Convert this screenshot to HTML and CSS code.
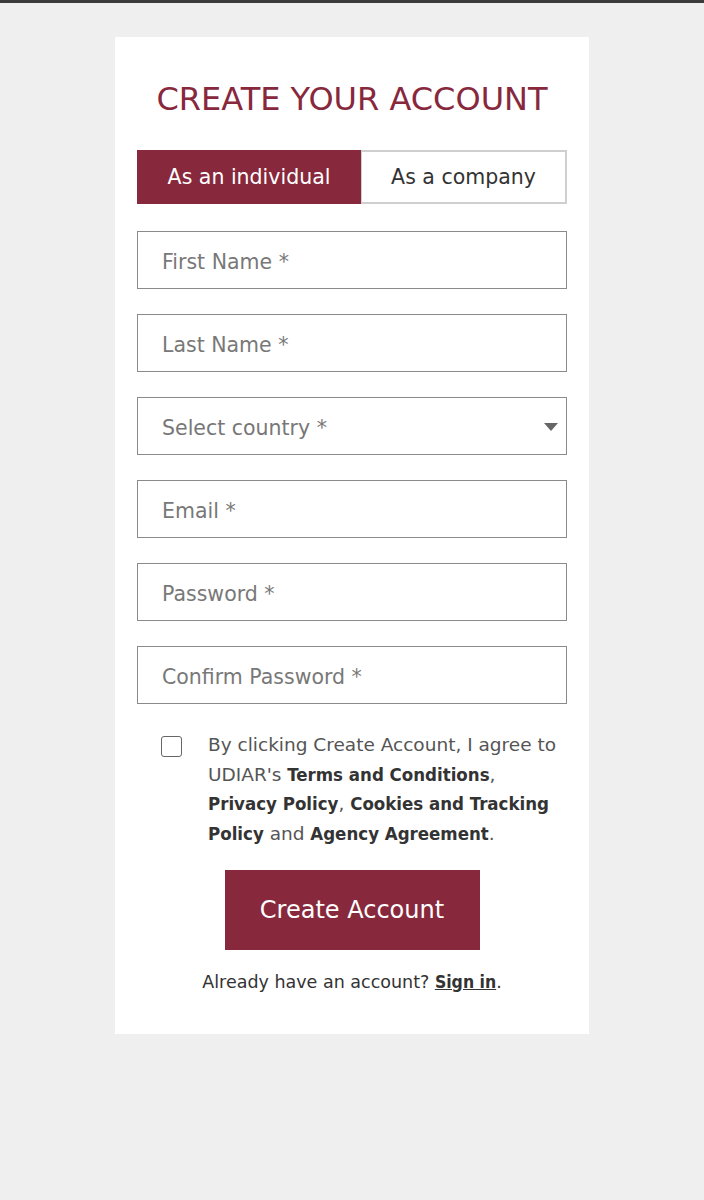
FILE: index.html
```html
<!DOCTYPE html>
<html lang="en">
<head>
<meta charset="UTF-8">
<link rel="stylesheet" href="styles.css">
<title>Create your account</title>
</head>
<body>
<div class="card">
  <h1 class="title">CREATE YOUR ACCOUNT</h1>
  <div class="tabs">
    <div class="tab active">As an individual</div>
    <div class="tab">As a company</div>
  </div>
  <form class="form">
    <input class="field" type="text" placeholder="First Name *">
    <input class="field" type="text" placeholder="Last Name *">
    <div class="select-wrap">
      <select class="field select">
        <option>Select country *</option>
      </select>
      <svg class="caret" width="14" height="8" viewBox="0 0 14 8"><path d="M0 0h14L7 8z" fill="#666"/></svg>
    </div>
    <input class="field" type="email" placeholder="Email *">
    <input class="field" type="password" placeholder="Password *">
    <input class="field" type="password" placeholder="Confirm Password *">
    <label class="agree">
      <span class="box"></span>
      <span class="agree-text">By clicking Create Account, I agree to<br>UDIAR's <b>Terms and Conditions</b>,<br><b>Privacy Policy</b>, <b>Cookies and Tracking</b><br><b>Policy</b> and <b>Agency Agreement</b>.</span>
    </label>
    <div class="actions">
      <button class="submit" type="button">Create Account</button>
    </div>
    <p class="signin">Already have an account? <a href="#">Sign in</a>.</p>
  </form>
</div>
</body>
</html>
```
FILE: styles.css
```css
body {
  margin: 0;
  padding: 0;
  background: #efefef;
  border-top: 3px solid #3b3b3b;
  font-family: "DejaVu Sans", "Open Sans", sans-serif;
  color: #333;
}
.card {
  width: 430px;
  margin: 34px auto 0;
  padding: 42px 22px 40px;
  background: #fff;
}
.title {
  margin: 0;
  font-size: 32px;
  line-height: 40px;
  font-weight: normal;
  color: #88283d;
  text-align: center;
}
.tabs {
  display: flex;
  margin-top: 31px;
  height: 54px;
}
.tab {
  display: flex;
  align-items: center;
  justify-content: center;
  font-size: 20.5px;
  color: #333;
  box-sizing: border-box;
}
.tab.active {
  width: 224px;
  background: #88283d;
  color: #fff;
}
.tab:not(.active) {
  flex: 1;
  border: 2px solid #cfcfcf;
  border-left: 1px solid #cfcfcf;
}
.form {
  display: flex;
  flex-direction: column;
  gap: 25px;
  margin-top: 27px;
}
.field {
  display: block;
  width: 100%;
  height: 58px;
  box-sizing: border-box;
  border: 1px solid #8a8a8a;
  border-radius: 0;
  padding: 3px 24px 0;
  font: 20.5px "DejaVu Sans", "Open Sans", sans-serif;
  color: #777;
  background: #fff;
  outline: none;
}
.field::placeholder {
  color: #787878;
}
.select-wrap {
  position: relative;
}
.select {
  appearance: none;
  -webkit-appearance: none;
}
.caret {
  position: absolute;
  right: 9px;
  top: 26px;
}
.agree {
  display: flex;
  align-items: flex-start;
  gap: 26px;
  margin-top: 1px;
  padding-left: 24px;
}
.box {
  flex: none;
  width: 19px;
  height: 19px;
  margin-top: 6px;
  border: 1.5px solid #666;
  border-radius: 3px;
}
.agree-text {
  font-size: 18.5px;
  line-height: 29.5px;
  color: #555;
  white-space: nowrap;
}
.agree-text b {
  font-family: "DejaVu Sans Condensed", "DejaVu Sans", sans-serif;
  font-weight: bold;
  color: #333;
}
.actions {
  display: flex;
  justify-content: center;
  margin-top: -3px;
}
.submit {
  width: 255px;
  height: 80px;
  border: none;
  background: #88283d;
  color: #fff;
  font: 24px "DejaVu Sans", "Open Sans", sans-serif;
}
.signin {
  margin: -5px 0 0;
  text-align: center;
  font-size: 17.5px;
  line-height: 24px;
  color: #333;
}
.signin a {
  color: #333;
  font-family: "DejaVu Sans Condensed", "DejaVu Sans", sans-serif;
  font-weight: bold;
}
```
